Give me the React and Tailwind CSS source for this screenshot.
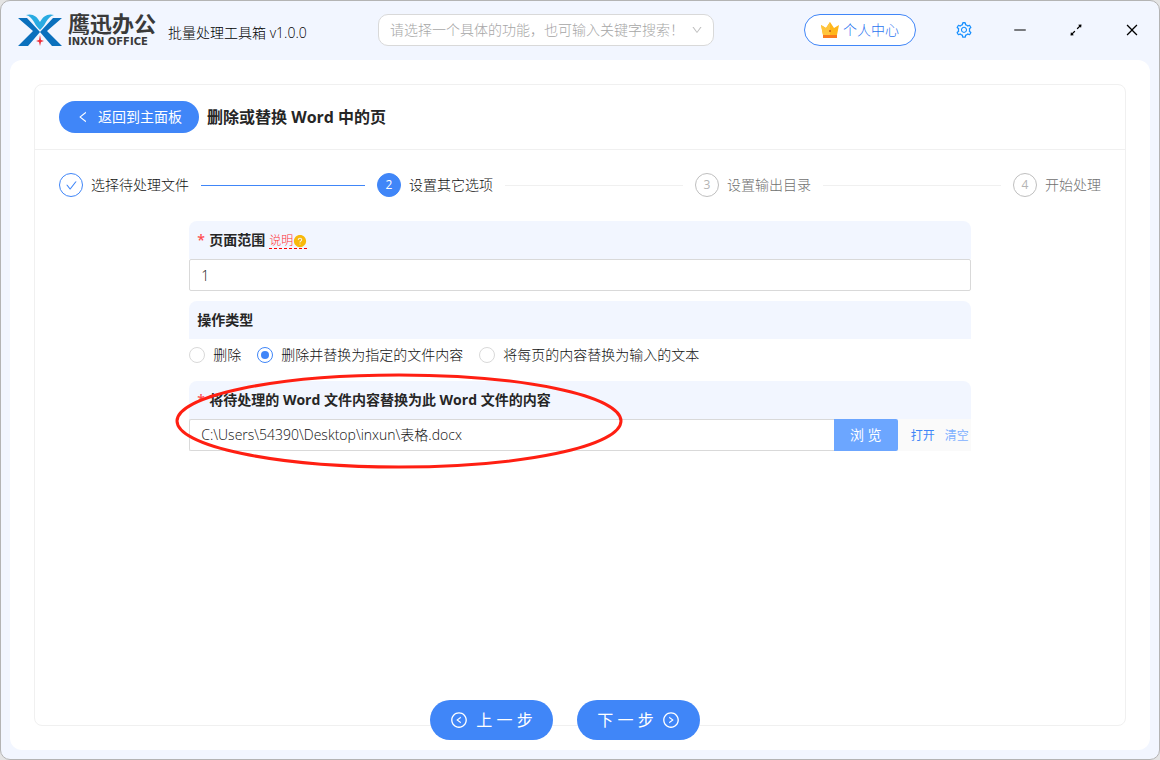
import React from 'react';
import {
  AiFillQuestionCircle, AiOutlineArrowsAlt, AiOutlineCheck, AiOutlineClose, AiOutlineDown,
  AiOutlineLeft, AiOutlineLeftCircle, AiOutlineMinus, AiOutlineRightCircle, AiOutlineSetting,
} from 'react-icons/ai';

const STEPS = [
  { title: '选择待处理文件', state: 'done' },
  { title: '设置其它选项', state: 'active' },
  { title: '设置输出目录', state: 'wait' },
  { title: '开始处理', state: 'wait' },
];

const STEP_STYLES = {
  done: { dot: 'border-[#4086f8] text-[#4086f8]', title: 'text-[#111]', line: 'bg-[#4086f8]' },
  active: { dot: 'border-[#4086f8] bg-[#4086f8] text-white', title: 'text-[#111]', line: 'bg-[#f0f0f0]' },
  wait: { dot: 'border-[#bfbfbf] text-[#b4b4b4]', title: 'text-[#707070]', line: 'bg-[#f0f0f0]' },
};

const MODES = [
  { id: 'delete', label: '删除' },
  { id: 'file', label: '删除并替换为指定的文件内容' },
  { id: 'text', label: '将每页的内容替换为输入的文本' },
];

function Logo() {
  return (
    <div className="flex items-center gap-[6px]">
      <svg width="44" height="32" viewBox="0 0 44 32" aria-hidden="true">
        <path d="M0 4h9l13 14-12 14H0l15-15z" fill="#0a70bd" />
        <path d="M44 4h-9L22 18l12 14h10L29 17z" fill="#0a70bd" />
        <path d="M8 1c6-2 11 1 14 7 3-6 8-9 14-7-4 1-6 4-8 7-2 4-4 6-6 8-2-2-4-4-6-8-2-3-4-6-8-7z" fill="#29abe2" />
        <path d="M22 21l1 5 3 1-3 1-1 4-1-4-3-1 3-1z" fill="#ee2e3a" />
      </svg>
      <div className="flex flex-col gap-[6px] whitespace-nowrap text-[#3a3a3a]">
        <span className="font-['Noto_Sans_CJK_SC',sans-serif] text-[22px] leading-[18px] font-bold">鹰迅办公</span>
        <span className="font-['DejaVu_Sans',sans-serif] text-[10px] leading-[10px] font-bold">INXUN OFFICE</span>
      </div>
    </div>
  );
}

function Crown() {
  return (
    <svg width="18" height="16" viewBox="0 0 18 16" aria-hidden="true">
      <path d="M0 3l5 3 4-6 4 6 5-3-2 10H2z" fill="#ffb61a" />
      <path d="M0 3l5 3 4-6v13H2z" fill="#ffc53d" />
      <circle cx="9" cy="9" r="1" fill="#c2571a" />
      <path d="M2 13h14v3H2z" fill="#fa7a1e" />
    </svg>
  );
}

function WindowButton({ label, className, children }) {
  return (
    <button type="button" aria-label={label} className={`flex h-10 w-14 items-center justify-center ${className}`}>
      {children}
    </button>
  );
}

function TitleBar() {
  return (
    <header className="-mr-px mb-px flex h-[58px] shrink-0 items-center">
      <div className="flex w-[377px] shrink-0 items-center gap-3 pl-[17px]">
        <Logo />
        <span className="pt-[6px] whitespace-nowrap text-black">批量处理工具箱 v1.0.0</span>
      </div>
      <div className="relative w-[336px]">
        <select aria-label="功能搜索" defaultValue="" className="block h-8 w-full appearance-none rounded-[10px] border border-[#d9d9d9] bg-white pr-8 pl-[11px] text-[#a6a6a6]">
          <option value="">请选择一个具体的功能，也可输入关键字搜索！</option>
        </select>
        <AiOutlineDown size={12} className="pointer-events-none absolute top-[10px] right-[11px] text-[#bfbfbf]" />
      </div>
      <div className="ml-auto flex items-center">
        <button type="button" className="mr-5 flex h-8 w-28 items-center justify-center gap-1 rounded-full border border-[#4086f8] bg-white text-[#2a74f0]">
          <Crown />
          个人中心
        </button>
        <WindowButton label="设置" className="text-[#1890ff]"><AiOutlineSetting size={18} /></WindowButton>
        <WindowButton label="最小化" className="text-black"><AiOutlineMinus size={16} /></WindowButton>
        <WindowButton label="最大化" className="text-black"><AiOutlineArrowsAlt size={16} /></WindowButton>
        <WindowButton label="关闭" className="text-black"><AiOutlineClose size={16} /></WindowButton>
      </div>
    </header>
  );
}

function Steps() {
  return (
    <ol className="flex">
      {STEPS.map((step, i) => {
        const style = STEP_STYLES[step.state];
        const last = i === STEPS.length - 1;
        return (
          <li key={step.title} className={last ? 'flex flex-none items-center' : 'mr-3 flex flex-1 items-center'}>
            <span className={`flex size-6 items-center justify-center rounded-full border text-xs font-normal ${style.dot}`}>
              {step.state === 'done' ? <AiOutlineCheck size={13} /> : i + 1}
            </span>
            <span className={`ml-2 whitespace-nowrap ${style.title}`}>{step.title}</span>
            {!last && <span className={`ml-3 h-px flex-1 ${style.line}`} />}
          </li>
        );
      })}
    </ol>
  );
}

function FieldHead({ htmlFor, required, label, children }) {
  return (
    <div className="flex h-[38px] items-center rounded-t-lg bg-[#f2f6ff] px-2">
      {required && <span className="mr-1 w-2 font-semibold text-[#ff4d4f]">*</span>}
      <label htmlFor={htmlFor} className="font-bold text-[#262626]">{label}</label>
      {children}
    </div>
  );
}

export default function App() {
  const [mode, setMode] = React.useState('file');
  const [range, setRange] = React.useState('1');
  const [path, setPath] = React.useState('C:\\Users\\54390\\Desktop\\inxun\\表格.docx');

  return (
    <div className="bg-[#e4e4e4] font-['Open_Sans','Noto_Sans_CJK_SC',sans-serif] text-sm font-light text-[#111]">
      <div className="flex min-h-screen flex-col rounded-[10px] border border-[#b4b4b4] bg-[#f2f6ff]">
        <TitleBar />
        <main className="relative mx-[9px] mb-[9px] flex flex-1 flex-col rounded-xl bg-white p-6">
          <section className="flex-1 rounded-lg border border-[#f0f0f0]">
            <div className="flex h-[65px] items-center gap-2 border-b border-[#f0f0f0] px-6">
              <button type="button" className="flex h-8 w-[140px] items-center justify-center gap-2 rounded-full bg-[#4086f8] font-normal text-white">
                <AiOutlineLeft size={14} />
                返回到主面板
              </button>
              <h1 className="text-base font-bold text-[#262626]">删除或替换 Word 中的页</h1>
            </div>

            <div className="px-6 pt-[23px] pb-16">
              <Steps />
              <form className="mx-auto mt-6 flex w-3/4 flex-col gap-[10px]">
                <div>
                  <FieldHead htmlFor="range" required label="页面范围">
                    <a href="#help" className="ml-1 flex h-[18px] items-center border-b border-dashed border-b-[#ff0000] pt-[2px] text-xs text-[#ff3034]">
                      说明
                      <AiFillQuestionCircle size={14} className="text-[#f8b90c]" />
                    </a>
                  </FieldHead>
                  <input id="range" value={range} onChange={(e) => setRange(e.target.value)} className="block h-8 w-full rounded-xs border border-[#d9d9d9] px-[11px]" />
                </div>

                <fieldset>
                  <legend className="flex h-[38px] w-full items-center rounded-t-lg bg-[#f2f6ff] px-2 font-bold text-[#262626]">操作类型</legend>
                  <div className="flex h-8 items-center gap-4">
                    {MODES.map((m) => (
                      <label key={m.id} className="flex items-center gap-2 whitespace-nowrap">
                        <input
                          type="radio"
                          name="mode"
                          checked={mode === m.id}
                          onChange={() => setMode(m.id)}
                          className="size-4 appearance-none rounded-full border border-[#d9d9d9] bg-white bg-clip-content p-[3px] checked:border-[#4086f8] checked:bg-[#4086f8]"
                        />
                        {m.label}
                      </label>
                    ))}
                  </div>
                </fieldset>

                <div className="relative">
                  <FieldHead htmlFor="path" required label="将待处理的 Word 文件内容替换为此 Word 文件的内容" />
                  <div className="flex h-8 bg-[#fafafa]">
                    <input id="path" value={path} onChange={(e) => setPath(e.target.value)} className="min-w-0 flex-1 rounded-l-xs border border-r-0 border-[#d9d9d9] bg-white px-[11px]" />
                    <button type="button" className="w-16 rounded-r-xs bg-[#6ca6ff] font-normal text-white">浏 览</button>
                    <div className="flex w-[73px] items-center justify-end gap-[10px] pt-px pr-[2px] text-xs font-normal whitespace-nowrap">
                      <a href="#open" className="text-[#4086f8]">打开</a>
                      <a href="#clear" className="text-[#7db0ff]">清空</a>
                    </div>
                  </div>
                  {/* highlight around the file picker */}
                  <svg width="448" height="96" viewBox="0 0 448 96" className="pointer-events-none absolute -top-2 -left-[14px]" aria-hidden="true">
                    <ellipse cx="224" cy="48" rx="222" ry="46" fill="none" stroke="#ff1f12" strokeWidth="3" />
                  </svg>
                </div>
              </form>
            </div>
          </section>

          <div className="absolute inset-x-0 bottom-[10px] flex justify-center gap-6 pr-[30px] text-base font-normal text-white">
            <button type="button" className="flex h-10 w-[123px] items-center justify-center gap-2 rounded-full bg-[#4086f8]">
              <AiOutlineLeftCircle size={18} />
              上 一 步
            </button>
            <button type="button" className="flex h-10 w-[123px] items-center justify-center gap-2 rounded-full bg-[#4086f8]">
              下 一 步
              <AiOutlineRightCircle size={18} />
            </button>
          </div>
        </main>
      </div>
    </div>
  );
}
